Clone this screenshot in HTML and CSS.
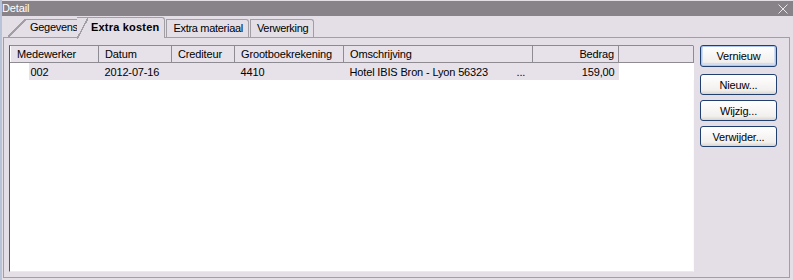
FILE: index.html
```html
<!DOCTYPE html>
<html lang="nl">
<head>
    <meta charset="UTF-8">
    <title>Detail</title>
    <link rel="stylesheet" href="styles.css">
</head>
<body>
    <div class="window">
        <div class="titlebar">
            <span class="title">Detail</span>
            <svg class="close" width="10" height="10" viewBox="0 0 10 10">
                <path d="M0.5 0.5 L9.5 9.5 M9.5 0.5 L0.5 9.5" stroke="#e8e6ea" stroke-width="1" fill="none"/>
            </svg>
        </div>

        <div class="tabs">
            <div class="tab tab-first">Gegevens</div>
            <div class="tab tab-active">Extra kosten</div>
            <div class="tab">Extra materiaal</div>
            <div class="tab">Verwerking</div>
        </div>

        <div class="panel">
            <div class="listview">
                <table class="grid">
                    <colgroup>
                        <col style="width:88px">
                        <col style="width:73px">
                        <col style="width:63px">
                        <col style="width:109px">
                        <col style="width:189px">
                        <col style="width:86px">
                        <col style="width:75px">
                    </colgroup>
                    <thead>
                        <tr>
                            <th>Medewerker</th>
                            <th>Datum</th>
                            <th>Crediteur</th>
                            <th>Grootboekrekening</th>
                            <th>Omschrijving</th>
                            <th class="num">Bedrag</th>
                            <th></th>
                        </tr>
                    </thead>
                    <tbody>
                        <tr class="row-selected">
                            <td class="first"><span>002</span></td>
                            <td>2012-07-16</td>
                            <td></td>
                            <td>4410</td>
                            <td class="desc">Hotel IBIS Bron - Lyon 56323<span class="more">...</span></td>
                            <td class="num">159,00</td>
                            <td class="blank"></td>
                        </tr>
                    </tbody>
                </table>
            </div>

            <div class="buttons">
                <button class="btn btn-default">Vernieuw</button>
                <button class="btn">Nieuw...</button>
                <button class="btn">Wijzig...</button>
                <button class="btn">Verwijder...</button>
            </div>
        </div>
    </div>
</body>
</html>
```

FILE: styles.css
```css
body {
    margin: 0;
    background-color: #e4dfe7;
    font-family: 'Liberation Sans', Arial, sans-serif;
    font-size: 11px;
    letter-spacing: -0.15px;
    color: #000;
}
.window {
    width: 791px;
    height: 280px;
    border-left: 2px solid #b9c3d8;
    overflow: hidden;
}
.titlebar {
    height: 15px;
    margin-top: 1px;
    background-color: #878388;
    color: #fff;
    display: flex;
    align-items: center;
    justify-content: space-between;
    padding: 0 5px 0 0;
}
.title {
    font-size: 11px;
    line-height: 15px;
}
.close {
    display: block;
}
.tabs {
    display: flex;
    align-items: flex-end;
    height: 21px;
    margin-left: 6px;
    position: relative;
    z-index: 1;
}
.tab {
    height: 17px;
    line-height: 17px;
    padding: 0 5px 0 6px;
    border: 1px solid #a19ea6;
    border-bottom: none;
    border-radius: 0 3px 0 0;
    margin-right: 1px;
    background-color: #e4dfe7;
    white-space: nowrap;
    letter-spacing: -0.3px;
}
.tab-first {
    position: relative;
    width: 48px;
    padding: 0 6px 0 22px;
    border: none;
    border-radius: 0;
    overflow: hidden;
    height: 18px;
}
.tab-first::before {
    content: "";
    position: absolute;
    left: 0;
    top: 0;
    width: 18px;
    height: 18px;
    background: linear-gradient(to bottom right, transparent 47%, #a19ea6 47%, #a19ea6 54%, transparent 54%);
}
.tab-first::after {
    content: "";
    position: absolute;
    left: 17px;
    right: 0;
    top: 0;
    border-top: 1px solid #a19ea6;
}
.tab-active {
    position: relative;
    height: 20px;
    line-height: 19px;
    margin-left: -8px;
    margin-bottom: -1px;
    padding: 0 5px 0 14px;
    border-left: none;
    font-weight: bold;
    letter-spacing: 0.2px;
}
.tab-active::before {
    content: "";
    position: absolute;
    left: 0;
    top: 0;
    width: 11px;
    height: 21px;
    background: linear-gradient(to bottom right, transparent 46%, #a19ea6 46%, #a19ea6 54%, transparent 54%);
}
.panel {
    margin-left: 1px;
    width: 780px;
    height: 232px;
    border: 1px solid #a19ea6;
    padding: 7px 0 0 5px;
    display: flex;
    gap: 6px;
}
.listview {
    width: 683px;
    height: 225px;
    background-color: #fff;
    border-left: 1px solid #5a575c;
    border-top: 1px solid #8c8990;
    border-right: 1px solid #fbfaf4;
    border-bottom: 1px solid #efebdc;
}
.grid {
    border-collapse: collapse;
    table-layout: fixed;
    width: 683px;
}
.grid th {
    height: 16px;
    padding: 0 0 0 6px;
    text-align: left;
    font-weight: normal;
    background-color: #e7e2e9;
    border-right: 1px solid #8f8b92;
    border-left: 1px solid #fff;
    border-bottom: 1px solid #8f8b92;
    white-space: nowrap;
}
.grid th.num {
    text-align: right;
    padding: 0 4px 0 0;
}
.grid td {
    height: 17px;
    padding: 0 0 0 6px;
    white-space: nowrap;
    background-color: #e7e2e9;
}
.grid td.first {
    padding: 0;
    background: linear-gradient(to right, #fff 18px, #e7e2e9 18px);
}
.grid td.first span {
    padding-left: 20px;
}
.grid td.num {
    text-align: right;
    padding: 0 4px 0 0;
}
.grid td.blank {
    background-color: #fff;
}
.desc {
    position: relative;
}
.more {
    position: absolute;
    left: 173px;
}
.buttons {
    display: flex;
    flex-direction: column;
    width: 77px;
}
.btn {
    height: 22px;
    margin-bottom: 5px;
    border: 1px solid #21406f;
    border-radius: 3px;
    background: linear-gradient(#ffffff, #f2f0ee 80%, #d9d5d0);
    font-family: 'Liberation Sans', Arial, sans-serif;
    font-size: 11px;
    letter-spacing: -0.15px;
    color: #000;
    padding: 0;
}
.btn-default {
    margin-bottom: 7px;
    box-shadow: inset 0 0 0 1px #aec7ee, inset 0 -1px 0 2px #d0ddf3;
}
.btn + .btn {
    height: 21px;
}
```
